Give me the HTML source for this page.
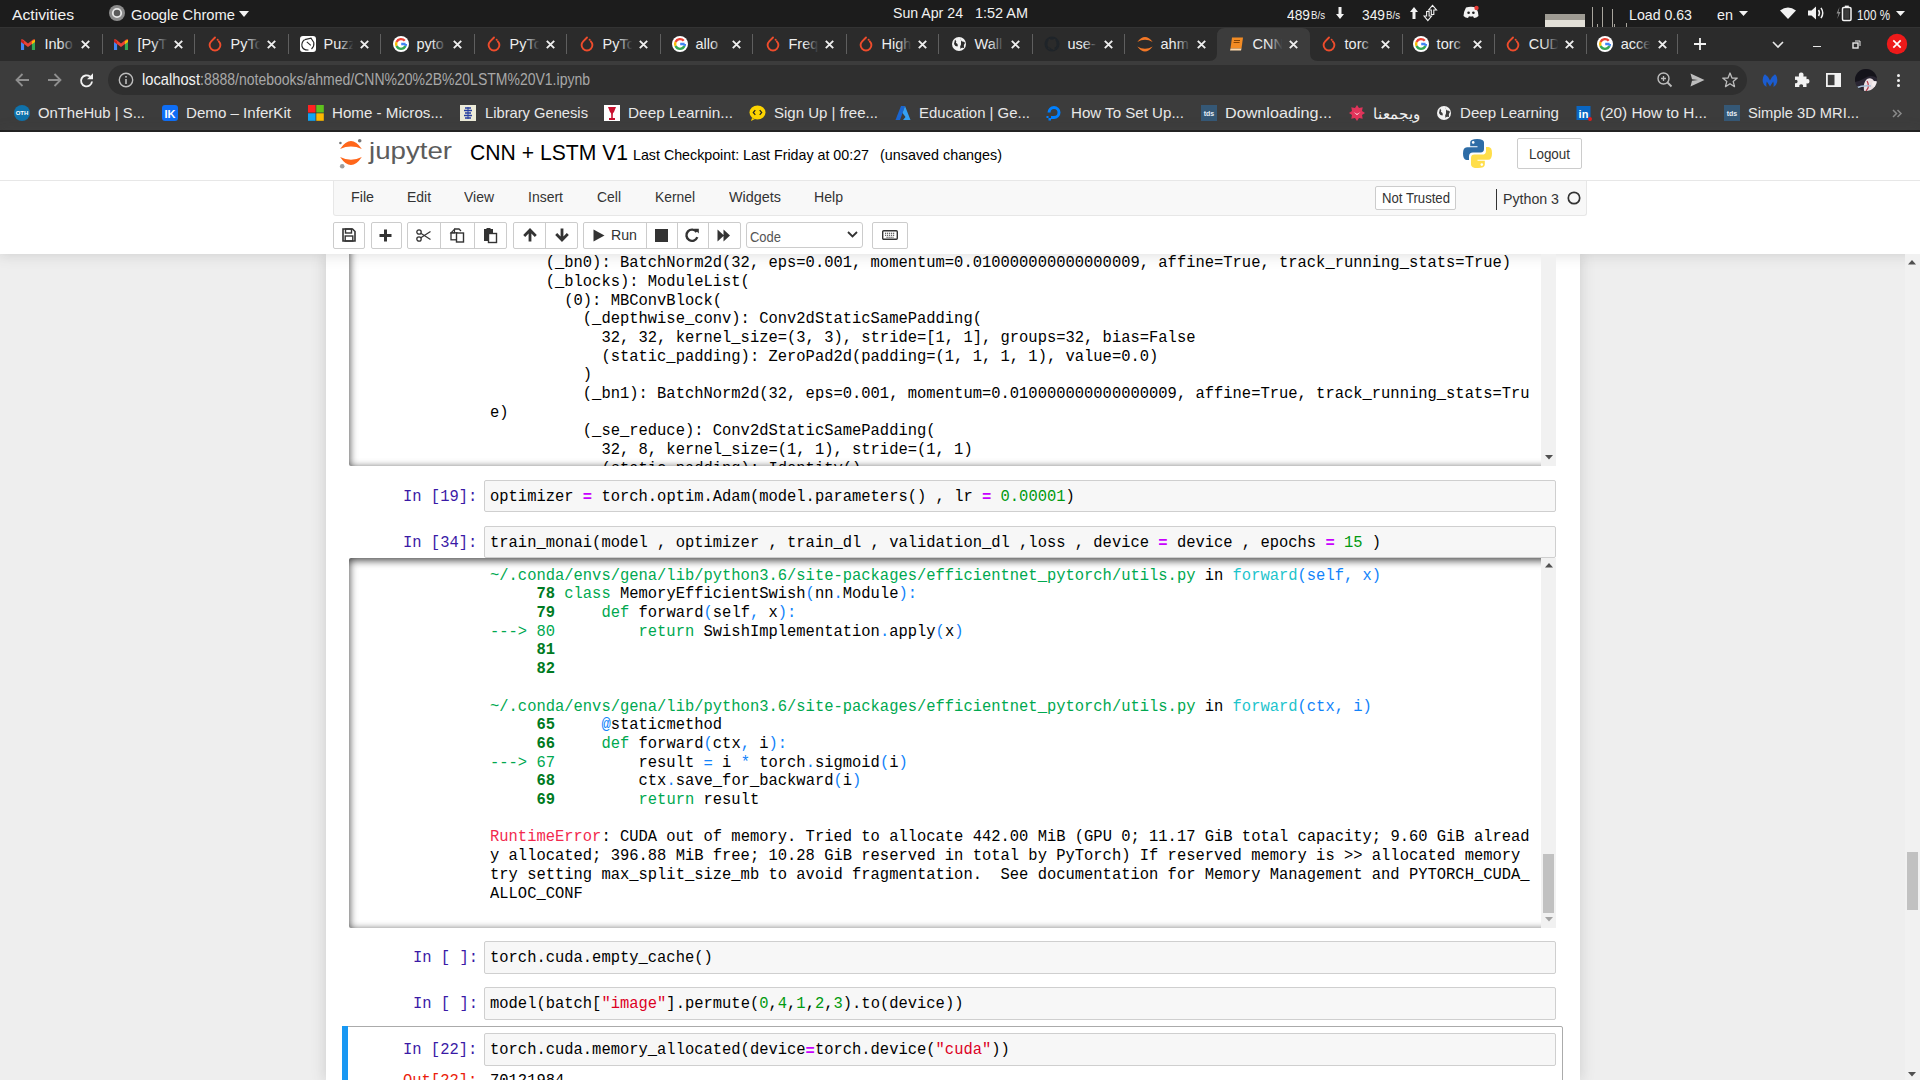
<!DOCTYPE html><html><head><meta charset="utf-8"><style>
html,body{margin:0;padding:0;width:1920px;height:1080px;overflow:hidden;background:#eeeeee;}
.t{position:absolute;white-space:pre;line-height:1;}
.r{position:absolute;box-sizing:border-box;}
svg{position:absolute;overflow:visible;}
</style></head><body>

<div class="r" style="left:0px;top:0px;width:1920px;height:27px;background:#1c1c1c"></div>
<div class="t" style="left:12.00px;top:6.70px;font-size:15px;color:#f2f2f2;font-family:'Liberation Sans', sans-serif;font-weight:normal;transform:scaleX(1.0476);transform-origin:0 0;">Activities</div>
<svg style="left:109px;top:5px;" width="16" height="16" viewBox="0 0 16 16"><circle cx="8" cy="8" r="8" fill="#8c8c8c"/><circle cx="8" cy="8" r="4.2" fill="#5a5a5a" stroke="#e8e8e8" stroke-width="1.8"/></svg>
<div class="t" style="left:131.00px;top:6.70px;font-size:15px;color:#f2f2f2;font-family:'Liberation Sans', sans-serif;font-weight:normal;transform:scaleX(0.9822);transform-origin:0 0;">Google Chrome</div>
<svg style="left:239px;top:11px;" width="10" height="6" viewBox="0 0 10 6"><path d="M0 0 L10 0 L5 6 Z" fill="#f2f2f2"/></svg>
<div class="t" style="left:893.00px;top:4.90px;font-size:15px;color:#f2f2f2;font-family:'Liberation Sans', sans-serif;font-weight:normal;transform:scaleX(0.9431);transform-origin:0 0;">Sun Apr 24</div>
<div class="t" style="left:975.00px;top:4.90px;font-size:15px;color:#f2f2f2;font-family:'Liberation Sans', sans-serif;font-weight:normal;transform:scaleX(0.9630);transform-origin:0 0;">1:52 AM</div>
<div class="t" style="left:1287.00px;top:6.70px;font-size:15px;color:#f2f2f2;font-family:'Liberation Sans', sans-serif;font-weight:normal;transform:scaleX(0.9190);transform-origin:0 0;">489</div>
<div class="t" style="left:1311.00px;top:10.09px;font-size:11px;color:#f2f2f2;font-family:'Liberation Sans', sans-serif;font-weight:normal;transform:scaleX(0.8809);transform-origin:0 0;">B/s</div>
<svg style="left:1336px;top:7px;" width="8" height="12" viewBox="0 0 8 12"><path d="M2.5 0 H5.5 V7 H8 L4 12 L0 7 H2.5 Z" fill="#f2f2f2"/></svg>
<div class="t" style="left:1362.00px;top:6.70px;font-size:15px;color:#f2f2f2;font-family:'Liberation Sans', sans-serif;font-weight:normal;transform:scaleX(0.9190);transform-origin:0 0;">349</div>
<div class="t" style="left:1386.00px;top:10.09px;font-size:11px;color:#f2f2f2;font-family:'Liberation Sans', sans-serif;font-weight:normal;transform:scaleX(0.8809);transform-origin:0 0;">B/s</div>
<svg style="left:1410px;top:7px;" width="8" height="12" viewBox="0 0 8 12"><path d="M2.5 12 H5.5 V5 H8 L4 0 L0 5 H2.5 Z" fill="#f2f2f2"/></svg>
<svg style="left:1424px;top:5px;" width="14" height="16" viewBox="0 0 14 16"><path d="M2.6 6.5 H5.1 V11 H7.6 L3.85 15.6 L0.1 11 H2.6 Z" fill="#1c1c1c" stroke="#f2f2f2" stroke-width="1.1"/><path d="M7.3 9.5 H9.8 V5 H12.5 L8.55 0.4 L4.6 5 H7.3 Z" fill="#1c1c1c" stroke="#f2f2f2" stroke-width="1.1"/></svg>
<svg style="left:1463px;top:6px;" width="16" height="12" viewBox="0 0 16 12"><path d="M3 1.5 Q8 0 13 1.5 Q15.5 6 15.5 10 Q13.5 11.8 11 12 L10 10.3 Q8 10.9 6 10.3 L5 12 Q2.5 11.8 0.5 10 Q0.5 6 3 1.5 Z" fill="#f2f2f2"/><circle cx="5.6" cy="6.8" r="1.3" fill="#1c1c1c"/><circle cx="10.4" cy="6.8" r="1.3" fill="#1c1c1c"/><circle cx="13.5" cy="2" r="2.2" fill="#e53935"/></svg>
<div class="r" style="left:1545px;top:14px;width:40px;height:6px;background:#9e9b93"></div>
<div class="r" style="left:1545px;top:20px;width:40px;height:7px;background:#e2dfd7"></div>
<div class="r" style="left:1592px;top:7px;width:1px;height:20px;background:#a8a59d"></div>
<div class="r" style="left:1602px;top:7px;width:1px;height:20px;background:#a8a59d"></div>
<div class="r" style="left:1612px;top:9px;width:1px;height:18px;background:#a8a59d"></div>
<div class="r" style="left:1597px;top:24px;width:1px;height:3px;background:#a8a59d"></div>
<div class="r" style="left:1614px;top:24px;width:1px;height:3px;background:#a8a59d"></div>
<div class="r" style="left:1626px;top:23px;width:1px;height:4px;background:#a8a59d"></div>
<div class="t" style="left:1629.00px;top:6.70px;font-size:15px;color:#f2f2f2;font-family:'Liberation Sans', sans-serif;font-weight:normal;transform:scaleX(0.9441);transform-origin:0 0;">Load 0.63</div>
<div class="t" style="left:1717.00px;top:6.70px;font-size:15px;color:#f2f2f2;font-family:'Liberation Sans', sans-serif;font-weight:normal;transform:scaleX(0.9589);transform-origin:0 0;">en</div>
<svg style="left:1739px;top:11px;" width="9" height="5" viewBox="0 0 9 5"><path d="M0 0 L9 0 L4.5 5 Z" fill="#f2f2f2"/></svg>
<svg style="left:1780px;top:7px;" width="16" height="12" viewBox="0 0 16 12"><path d="M0 3.5 Q8 -2.5 16 3.5 L8 12 Z" fill="#f2f2f2"/></svg>
<svg style="left:1808px;top:6px;" width="16" height="14" viewBox="0 0 16 14"><path d="M0 4.5 H3.5 L8 0.5 V13.5 L3.5 9.5 H0 Z" fill="#f2f2f2"/><path d="M10.5 4 Q12.5 7 10.5 10 M13 1.8 Q16.5 7 13 12.2" fill="none" stroke="#f2f2f2" stroke-width="1.5"/></svg>
<svg style="left:1836px;top:5px;" width="16" height="16" viewBox="0 0 16 16"><path d="M3.5 2 L0.5 8.5 H2.5 L1.2 14 L4.5 7 H2.5 Z" fill="#8a8a8a"/><rect x="6.5" y="2.5" width="8.5" height="13" rx="1.2" fill="none" stroke="#f2f2f2" stroke-width="1.5"/><rect x="8.8" y="0.6" width="4" height="2" fill="#f2f2f2"/><rect x="8.3" y="4.3" width="5" height="9.4" fill="#f2f2f2" opacity="0.15"/></svg>
<div class="t" style="left:1857.00px;top:6.70px;font-size:15px;color:#f2f2f2;font-family:'Liberation Sans', sans-serif;font-weight:normal;transform:scaleX(0.7759);transform-origin:0 0;">100 %</div>
<svg style="left:1896px;top:11px;" width="9" height="5" viewBox="0 0 9 5"><path d="M0 0 L9 0 L4.5 5 Z" fill="#f2f2f2"/></svg>
<div class="r" style="left:0px;top:27px;width:1920px;height:34px;background:#2b2b2b"></div>
<div class="r" style="left:0px;top:27px;width:1920px;height:1px;background:#333333"></div>
<svg style="left:1209.0px;top:28px" width="109" height="33" viewBox="0 0 109 33"><path d="M0 33 Q8 33 8 25 L8 8 Q8 0 16 0 L93 0 Q101 0 101 8 L101 25 Q101 33 109 33 Z" fill="#3c3c3c"/></svg>
<svg style="left:21px;top:38.5px;" width="14" height="11" viewBox="0 0 14 11"><path d="M0 1.6 V11 H3.1 V4.2 Z" fill="#4285f4"/><path d="M14 1.6 V11 H10.9 V4.2 Z" fill="#34a853"/><path d="M0 1.6 Q0 -0.4 2 0.6 L7 4.6 L12 0.6 Q14 -0.4 14 1.6 V2.8 L7 8 L0 2.8 Z" fill="#ea4335"/><path d="M10.9 2.3 L14 0.6 V2.9 L10.9 5.2 Z" fill="#fbbc04"/><path d="M0 0.6 L3.1 2.3 V5.2 L0 2.9 Z" fill="#c5221f"/></svg>
<div class="t" style="left:44.50px;top:36.73px;font-size:14.5px;color:#eeeeee;font-family:'Liberation Sans', sans-serif;font-weight:normal;">Inbo</div>
<div class="r" style="left:60.0px;top:33px;width:16px;height:22px;background:linear-gradient(to right, rgba(0,0,0,0), #2b2b2b 90%)"></div>
<div class="r" style="left:76.0px;top:33px;width:4px;height:22px;background:#2b2b2b"></div>
<svg style="left:81px;top:40px;" width="9" height="9" viewBox="0 0 9 9"><path d="M0.8 0.8 L8.2 8.2 M8.2 0.8 L0.8 8.2" stroke="#eeeeee" stroke-width="1.9"/></svg>
<div class="r" style="left:102px;top:34px;width:1px;height:20px;background:#5f5f5f"></div>
<svg style="left:114px;top:38.5px;" width="14" height="11" viewBox="0 0 14 11"><path d="M0 1.6 V11 H3.1 V4.2 Z" fill="#4285f4"/><path d="M14 1.6 V11 H10.9 V4.2 Z" fill="#34a853"/><path d="M0 1.6 Q0 -0.4 2 0.6 L7 4.6 L12 0.6 Q14 -0.4 14 1.6 V2.8 L7 8 L0 2.8 Z" fill="#ea4335"/><path d="M10.9 2.3 L14 0.6 V2.9 L10.9 5.2 Z" fill="#fbbc04"/><path d="M0 0.6 L3.1 2.3 V5.2 L0 2.9 Z" fill="#c5221f"/></svg>
<div class="t" style="left:137.50px;top:36.73px;font-size:14.5px;color:#eeeeee;font-family:'Liberation Sans', sans-serif;font-weight:normal;">[PyT</div>
<div class="r" style="left:153.0px;top:33px;width:16px;height:22px;background:linear-gradient(to right, rgba(0,0,0,0), #2b2b2b 90%)"></div>
<div class="r" style="left:169.0px;top:33px;width:4px;height:22px;background:#2b2b2b"></div>
<svg style="left:174px;top:40px;" width="9" height="9" viewBox="0 0 9 9"><path d="M0.8 0.8 L8.2 8.2 M8.2 0.8 L0.8 8.2" stroke="#eeeeee" stroke-width="1.9"/></svg>
<div class="r" style="left:194px;top:34px;width:1px;height:20px;background:#5f5f5f"></div>
<svg style="left:207px;top:36px;" width="16" height="16" viewBox="0 0 16 16"><path d="M8 1.5 L4.2 5.3 A5.4 5.4 0 1 0 11.8 5.3" fill="none" stroke="#ee4c2c" stroke-width="1.9" stroke-linecap="round"/><circle cx="10.6" cy="3.8" r="1" fill="#ee4c2c"/></svg>
<div class="t" style="left:230.50px;top:36.73px;font-size:14.5px;color:#eeeeee;font-family:'Liberation Sans', sans-serif;font-weight:normal;">PyTo</div>
<div class="r" style="left:246.0px;top:33px;width:16px;height:22px;background:linear-gradient(to right, rgba(0,0,0,0), #2b2b2b 90%)"></div>
<div class="r" style="left:262.0px;top:33px;width:4px;height:22px;background:#2b2b2b"></div>
<svg style="left:267px;top:40px;" width="9" height="9" viewBox="0 0 9 9"><path d="M0.8 0.8 L8.2 8.2 M8.2 0.8 L0.8 8.2" stroke="#eeeeee" stroke-width="1.9"/></svg>
<div class="r" style="left:288px;top:34px;width:1px;height:20px;background:#5f5f5f"></div>
<svg style="left:300px;top:36px;" width="16" height="16" viewBox="0 0 16 16"><rect x="0" y="0" width="16" height="16" rx="3" fill="#fff"/><path d="M4.5 3.8 Q1.2 6.5 2 10.5 Q3.2 14.2 8.5 14 M4.8 3.6 L11 2.2 L13.8 6.5 Q14.5 10 11.5 13 M6.8 5.8 L10.8 9.3" fill="none" stroke="#262626" stroke-width="1.1"/></svg>
<div class="t" style="left:323.50px;top:36.73px;font-size:14.5px;color:#eeeeee;font-family:'Liberation Sans', sans-serif;font-weight:normal;">Puzz</div>
<div class="r" style="left:339.0px;top:33px;width:16px;height:22px;background:linear-gradient(to right, rgba(0,0,0,0), #2b2b2b 90%)"></div>
<div class="r" style="left:355.0px;top:33px;width:4px;height:22px;background:#2b2b2b"></div>
<svg style="left:360px;top:40px;" width="9" height="9" viewBox="0 0 9 9"><path d="M0.8 0.8 L8.2 8.2 M8.2 0.8 L0.8 8.2" stroke="#eeeeee" stroke-width="1.9"/></svg>
<div class="r" style="left:380px;top:34px;width:1px;height:20px;background:#5f5f5f"></div>
<svg style="left:393px;top:36px;" width="16" height="16" viewBox="0 0 16 16"><circle cx="8" cy="8" r="8" fill="#fff"/><g fill="none" stroke-width="2.4"><path d="M11.75 4.85 A4.9 4.9 0 0 0 3.56 5.93" stroke="#ea4335"/><path d="M3.56 5.93 A4.9 4.9 0 0 0 3.56 10.07" stroke="#fbbc05"/><path d="M3.56 10.07 A4.9 4.9 0 0 0 12.44 10.07" stroke="#34a853"/><path d="M12.44 10.07 A4.9 4.9 0 0 0 12.9 8 M8.2 8 H12.6" stroke="#4285f4"/></g></svg>
<div class="t" style="left:416.50px;top:36.73px;font-size:14.5px;color:#eeeeee;font-family:'Liberation Sans', sans-serif;font-weight:normal;">pyto</div>
<div class="r" style="left:432.0px;top:33px;width:16px;height:22px;background:linear-gradient(to right, rgba(0,0,0,0), #2b2b2b 90%)"></div>
<div class="r" style="left:448.0px;top:33px;width:4px;height:22px;background:#2b2b2b"></div>
<svg style="left:453px;top:40px;" width="9" height="9" viewBox="0 0 9 9"><path d="M0.8 0.8 L8.2 8.2 M8.2 0.8 L0.8 8.2" stroke="#eeeeee" stroke-width="1.9"/></svg>
<div class="r" style="left:474px;top:34px;width:1px;height:20px;background:#5f5f5f"></div>
<svg style="left:486px;top:36px;" width="16" height="16" viewBox="0 0 16 16"><path d="M8 1.5 L4.2 5.3 A5.4 5.4 0 1 0 11.8 5.3" fill="none" stroke="#ee4c2c" stroke-width="1.9" stroke-linecap="round"/><circle cx="10.6" cy="3.8" r="1" fill="#ee4c2c"/></svg>
<div class="t" style="left:509.50px;top:36.73px;font-size:14.5px;color:#eeeeee;font-family:'Liberation Sans', sans-serif;font-weight:normal;">PyTo</div>
<div class="r" style="left:525.0px;top:33px;width:16px;height:22px;background:linear-gradient(to right, rgba(0,0,0,0), #2b2b2b 90%)"></div>
<div class="r" style="left:541.0px;top:33px;width:4px;height:22px;background:#2b2b2b"></div>
<svg style="left:546px;top:40px;" width="9" height="9" viewBox="0 0 9 9"><path d="M0.8 0.8 L8.2 8.2 M8.2 0.8 L0.8 8.2" stroke="#eeeeee" stroke-width="1.9"/></svg>
<div class="r" style="left:566px;top:34px;width:1px;height:20px;background:#5f5f5f"></div>
<svg style="left:579px;top:36px;" width="16" height="16" viewBox="0 0 16 16"><path d="M8 1.5 L4.2 5.3 A5.4 5.4 0 1 0 11.8 5.3" fill="none" stroke="#ee4c2c" stroke-width="1.9" stroke-linecap="round"/><circle cx="10.6" cy="3.8" r="1" fill="#ee4c2c"/></svg>
<div class="t" style="left:602.50px;top:36.73px;font-size:14.5px;color:#eeeeee;font-family:'Liberation Sans', sans-serif;font-weight:normal;">PyTo</div>
<div class="r" style="left:618.0px;top:33px;width:16px;height:22px;background:linear-gradient(to right, rgba(0,0,0,0), #2b2b2b 90%)"></div>
<div class="r" style="left:634.0px;top:33px;width:4px;height:22px;background:#2b2b2b"></div>
<svg style="left:639px;top:40px;" width="9" height="9" viewBox="0 0 9 9"><path d="M0.8 0.8 L8.2 8.2 M8.2 0.8 L0.8 8.2" stroke="#eeeeee" stroke-width="1.9"/></svg>
<div class="r" style="left:660px;top:34px;width:1px;height:20px;background:#5f5f5f"></div>
<svg style="left:672px;top:36px;" width="16" height="16" viewBox="0 0 16 16"><circle cx="8" cy="8" r="8" fill="#fff"/><g fill="none" stroke-width="2.4"><path d="M11.75 4.85 A4.9 4.9 0 0 0 3.56 5.93" stroke="#ea4335"/><path d="M3.56 5.93 A4.9 4.9 0 0 0 3.56 10.07" stroke="#fbbc05"/><path d="M3.56 10.07 A4.9 4.9 0 0 0 12.44 10.07" stroke="#34a853"/><path d="M12.44 10.07 A4.9 4.9 0 0 0 12.9 8 M8.2 8 H12.6" stroke="#4285f4"/></g></svg>
<div class="t" style="left:695.50px;top:36.73px;font-size:14.5px;color:#eeeeee;font-family:'Liberation Sans', sans-serif;font-weight:normal;">allo</div>
<div class="r" style="left:711.0px;top:33px;width:16px;height:22px;background:linear-gradient(to right, rgba(0,0,0,0), #2b2b2b 90%)"></div>
<div class="r" style="left:727.0px;top:33px;width:4px;height:22px;background:#2b2b2b"></div>
<svg style="left:732px;top:40px;" width="9" height="9" viewBox="0 0 9 9"><path d="M0.8 0.8 L8.2 8.2 M8.2 0.8 L0.8 8.2" stroke="#eeeeee" stroke-width="1.9"/></svg>
<div class="r" style="left:752px;top:34px;width:1px;height:20px;background:#5f5f5f"></div>
<svg style="left:765px;top:36px;" width="16" height="16" viewBox="0 0 16 16"><path d="M8 1.5 L4.2 5.3 A5.4 5.4 0 1 0 11.8 5.3" fill="none" stroke="#ee4c2c" stroke-width="1.9" stroke-linecap="round"/><circle cx="10.6" cy="3.8" r="1" fill="#ee4c2c"/></svg>
<div class="t" style="left:788.50px;top:36.73px;font-size:14.5px;color:#eeeeee;font-family:'Liberation Sans', sans-serif;font-weight:normal;">Freq</div>
<div class="r" style="left:804.0px;top:33px;width:16px;height:22px;background:linear-gradient(to right, rgba(0,0,0,0), #2b2b2b 90%)"></div>
<div class="r" style="left:820.0px;top:33px;width:4px;height:22px;background:#2b2b2b"></div>
<svg style="left:825px;top:40px;" width="9" height="9" viewBox="0 0 9 9"><path d="M0.8 0.8 L8.2 8.2 M8.2 0.8 L0.8 8.2" stroke="#eeeeee" stroke-width="1.9"/></svg>
<div class="r" style="left:846px;top:34px;width:1px;height:20px;background:#5f5f5f"></div>
<svg style="left:858px;top:36px;" width="16" height="16" viewBox="0 0 16 16"><path d="M8 1.5 L4.2 5.3 A5.4 5.4 0 1 0 11.8 5.3" fill="none" stroke="#ee4c2c" stroke-width="1.9" stroke-linecap="round"/><circle cx="10.6" cy="3.8" r="1" fill="#ee4c2c"/></svg>
<div class="t" style="left:881.50px;top:36.73px;font-size:14.5px;color:#eeeeee;font-family:'Liberation Sans', sans-serif;font-weight:normal;">High</div>
<div class="r" style="left:897.0px;top:33px;width:16px;height:22px;background:linear-gradient(to right, rgba(0,0,0,0), #2b2b2b 90%)"></div>
<div class="r" style="left:913.0px;top:33px;width:4px;height:22px;background:#2b2b2b"></div>
<svg style="left:918px;top:40px;" width="9" height="9" viewBox="0 0 9 9"><path d="M0.8 0.8 L8.2 8.2 M8.2 0.8 L0.8 8.2" stroke="#eeeeee" stroke-width="1.9"/></svg>
<div class="r" style="left:938px;top:34px;width:1px;height:20px;background:#5f5f5f"></div>
<svg style="left:951px;top:36px;" width="16" height="16" viewBox="0 0 16 16"><circle cx="8" cy="8" r="7" fill="#f2f2f2"/><path d="M4 3.5 Q6 5 5 7 Q7.5 8 6.5 10.5 Q4 10.5 3 8 Z M10 2 Q9 4 11 5.5 Q13.5 5 14 7 Q12 9 13 12 Q10.5 11 9.5 13 Q8.5 10 10 8.5" fill="#2b2b2b"/></svg>
<div class="t" style="left:974.50px;top:36.73px;font-size:14.5px;color:#eeeeee;font-family:'Liberation Sans', sans-serif;font-weight:normal;">Wall</div>
<div class="r" style="left:990.0px;top:33px;width:16px;height:22px;background:linear-gradient(to right, rgba(0,0,0,0), #2b2b2b 90%)"></div>
<div class="r" style="left:1006.0px;top:33px;width:4px;height:22px;background:#2b2b2b"></div>
<svg style="left:1011px;top:40px;" width="9" height="9" viewBox="0 0 9 9"><path d="M0.8 0.8 L8.2 8.2 M8.2 0.8 L0.8 8.2" stroke="#eeeeee" stroke-width="1.9"/></svg>
<div class="r" style="left:1032px;top:34px;width:1px;height:20px;background:#5f5f5f"></div>
<svg style="left:1044px;top:36px;" width="16" height="16" viewBox="0 0 16 16"><circle cx="8" cy="8" r="7.5" fill="#1f2429"/><path d="M5.5 14.5 V12 Q3.5 12 3 10 M10.5 14.5 V11.5 Q13 10.5 12.5 7.5 Q12.5 5.5 11.5 4.5 Q11.5 3 11 2.8 Q10 3 9 3.8 Q8 3.4 7 3.8 Q6 3 5 2.8 Q4.5 3 4.5 4.5 Q3.5 5.5 3.5 7.5 Q3 10.5 5.5 11.5" fill="#2b2b2b"/></svg>
<div class="t" style="left:1067.50px;top:36.73px;font-size:14.5px;color:#eeeeee;font-family:'Liberation Sans', sans-serif;font-weight:normal;">use-</div>
<div class="r" style="left:1083.0px;top:33px;width:16px;height:22px;background:linear-gradient(to right, rgba(0,0,0,0), #2b2b2b 90%)"></div>
<div class="r" style="left:1099.0px;top:33px;width:4px;height:22px;background:#2b2b2b"></div>
<svg style="left:1104px;top:40px;" width="9" height="9" viewBox="0 0 9 9"><path d="M0.8 0.8 L8.2 8.2 M8.2 0.8 L0.8 8.2" stroke="#eeeeee" stroke-width="1.9"/></svg>
<div class="r" style="left:1124px;top:34px;width:1px;height:20px;background:#5f5f5f"></div>
<svg style="left:1137px;top:36px;" width="16" height="16" viewBox="0 0 16 16"><path d="M0.3 6 Q8 -4 15.7 6 Q8 1.6 0.3 6 Z" fill="#f37726"/><path d="M0.3 10.5 Q8 20.5 15.7 10.5 Q8 14.9 0.3 10.5 Z" fill="#f37726"/></svg>
<div class="t" style="left:1160.50px;top:36.73px;font-size:14.5px;color:#eeeeee;font-family:'Liberation Sans', sans-serif;font-weight:normal;">ahm</div>
<div class="r" style="left:1176.0px;top:33px;width:16px;height:22px;background:linear-gradient(to right, rgba(0,0,0,0), #2b2b2b 90%)"></div>
<div class="r" style="left:1192.0px;top:33px;width:4px;height:22px;background:#2b2b2b"></div>
<svg style="left:1197px;top:40px;" width="9" height="9" viewBox="0 0 9 9"><path d="M0.8 0.8 L8.2 8.2 M8.2 0.8 L0.8 8.2" stroke="#eeeeee" stroke-width="1.9"/></svg>
<svg style="left:1229px;top:36px;" width="16" height="16" viewBox="0 0 16 16"><path d="M3 1.5 H14 L12.5 12.5 H1.5 Z" fill="#f28b24"/><path d="M1.5 12.5 H12.5 L12 14.5 H1 Z" fill="#ffd7a8"/><path d="M5 4.5 H11 M4.6 6.5 H10.6" stroke="#7a3c00" stroke-width="0.9"/></svg>
<div class="t" style="left:1252.50px;top:36.73px;font-size:14.5px;color:#eeeeee;font-family:'Liberation Sans', sans-serif;font-weight:normal;">CNN</div>
<div class="r" style="left:1268.0px;top:33px;width:16px;height:22px;background:linear-gradient(to right, rgba(0,0,0,0), #3c3c3c 90%)"></div>
<div class="r" style="left:1284.0px;top:33px;width:4px;height:22px;background:#3c3c3c"></div>
<svg style="left:1289px;top:40px;" width="9" height="9" viewBox="0 0 9 9"><path d="M0.8 0.8 L8.2 8.2 M8.2 0.8 L0.8 8.2" stroke="#eeeeee" stroke-width="1.9"/></svg>
<svg style="left:1321px;top:36px;" width="16" height="16" viewBox="0 0 16 16"><path d="M8 1.5 L4.2 5.3 A5.4 5.4 0 1 0 11.8 5.3" fill="none" stroke="#ee4c2c" stroke-width="1.9" stroke-linecap="round"/><circle cx="10.6" cy="3.8" r="1" fill="#ee4c2c"/></svg>
<div class="t" style="left:1344.56px;top:36.73px;font-size:14.5px;color:#eeeeee;font-family:'Liberation Sans', sans-serif;font-weight:normal;">torc</div>
<div class="r" style="left:1360.1px;top:33px;width:16px;height:22px;background:linear-gradient(to right, rgba(0,0,0,0), #2b2b2b 90%)"></div>
<div class="r" style="left:1376.1px;top:33px;width:4px;height:22px;background:#2b2b2b"></div>
<svg style="left:1381px;top:40px;" width="9" height="9" viewBox="0 0 9 9"><path d="M0.8 0.8 L8.2 8.2 M8.2 0.8 L0.8 8.2" stroke="#eeeeee" stroke-width="1.9"/></svg>
<div class="r" style="left:1402px;top:34px;width:1px;height:20px;background:#5f5f5f"></div>
<svg style="left:1413px;top:36px;" width="16" height="16" viewBox="0 0 16 16"><circle cx="8" cy="8" r="8" fill="#fff"/><g fill="none" stroke-width="2.4"><path d="M11.75 4.85 A4.9 4.9 0 0 0 3.56 5.93" stroke="#ea4335"/><path d="M3.56 5.93 A4.9 4.9 0 0 0 3.56 10.07" stroke="#fbbc05"/><path d="M3.56 10.07 A4.9 4.9 0 0 0 12.44 10.07" stroke="#34a853"/><path d="M12.44 10.07 A4.9 4.9 0 0 0 12.9 8 M8.2 8 H12.6" stroke="#4285f4"/></g></svg>
<div class="t" style="left:1436.62px;top:36.73px;font-size:14.5px;color:#eeeeee;font-family:'Liberation Sans', sans-serif;font-weight:normal;">torc</div>
<div class="r" style="left:1452.1px;top:33px;width:16px;height:22px;background:linear-gradient(to right, rgba(0,0,0,0), #2b2b2b 90%)"></div>
<div class="r" style="left:1468.1px;top:33px;width:4px;height:22px;background:#2b2b2b"></div>
<svg style="left:1473px;top:40px;" width="9" height="9" viewBox="0 0 9 9"><path d="M0.8 0.8 L8.2 8.2 M8.2 0.8 L0.8 8.2" stroke="#eeeeee" stroke-width="1.9"/></svg>
<div class="r" style="left:1494px;top:34px;width:1px;height:20px;background:#5f5f5f"></div>
<svg style="left:1505px;top:36px;" width="16" height="16" viewBox="0 0 16 16"><path d="M8 1.5 L4.2 5.3 A5.4 5.4 0 1 0 11.8 5.3" fill="none" stroke="#ee4c2c" stroke-width="1.9" stroke-linecap="round"/><circle cx="10.6" cy="3.8" r="1" fill="#ee4c2c"/></svg>
<div class="t" style="left:1528.68px;top:36.73px;font-size:14.5px;color:#eeeeee;font-family:'Liberation Sans', sans-serif;font-weight:normal;">CUD</div>
<div class="r" style="left:1544.2px;top:33px;width:16px;height:22px;background:linear-gradient(to right, rgba(0,0,0,0), #2b2b2b 90%)"></div>
<div class="r" style="left:1560.2px;top:33px;width:4px;height:22px;background:#2b2b2b"></div>
<svg style="left:1565px;top:40px;" width="9" height="9" viewBox="0 0 9 9"><path d="M0.8 0.8 L8.2 8.2 M8.2 0.8 L0.8 8.2" stroke="#eeeeee" stroke-width="1.9"/></svg>
<div class="r" style="left:1586px;top:34px;width:1px;height:20px;background:#5f5f5f"></div>
<svg style="left:1597px;top:36px;" width="16" height="16" viewBox="0 0 16 16"><circle cx="8" cy="8" r="8" fill="#fff"/><g fill="none" stroke-width="2.4"><path d="M11.75 4.85 A4.9 4.9 0 0 0 3.56 5.93" stroke="#ea4335"/><path d="M3.56 5.93 A4.9 4.9 0 0 0 3.56 10.07" stroke="#fbbc05"/><path d="M3.56 10.07 A4.9 4.9 0 0 0 12.44 10.07" stroke="#34a853"/><path d="M12.44 10.07 A4.9 4.9 0 0 0 12.9 8 M8.2 8 H12.6" stroke="#4285f4"/></g></svg>
<div class="t" style="left:1620.74px;top:36.73px;font-size:14.5px;color:#eeeeee;font-family:'Liberation Sans', sans-serif;font-weight:normal;">acce</div>
<div class="r" style="left:1636.2px;top:33px;width:16px;height:22px;background:linear-gradient(to right, rgba(0,0,0,0), #2b2b2b 90%)"></div>
<div class="r" style="left:1652.2px;top:33px;width:4px;height:22px;background:#2b2b2b"></div>
<svg style="left:1658px;top:40px;" width="9" height="9" viewBox="0 0 9 9"><path d="M0.8 0.8 L8.2 8.2 M8.2 0.8 L0.8 8.2" stroke="#eeeeee" stroke-width="1.9"/></svg>
<div class="r" style="left:1677px;top:34px;width:1px;height:20px;background:#5f5f5f"></div>
<svg style="left:1694px;top:38px;" width="12" height="12" viewBox="0 0 12 12"><path d="M6 0 V12 M0 6 H12" stroke="#f2f2f2" stroke-width="1.8"/></svg>
<svg style="left:1772px;top:41px;" width="12" height="7" viewBox="0 0 12 7"><path d="M1 1 L6 6 L11 1" fill="none" stroke="#e8e8e8" stroke-width="1.6"/></svg>
<div class="r" style="left:1813px;top:45.5px;width:8px;height:1.6px;background:#e8e8e8"></div>
<svg style="left:1852px;top:40px;" width="9" height="9" viewBox="0 0 9 9"><rect x="1" y="3" width="5" height="5" fill="none" stroke="#e8e8e8" stroke-width="1.4"/><path d="M3 1 H8 V6" fill="none" stroke="#e8e8e8" stroke-width="1"/></svg>
<svg style="left:1886px;top:33px;" width="22" height="22" viewBox="0 0 22 22"><circle cx="11" cy="11" r="10.2" fill="#ee1a1a"/><path d="M7.3 7.3 L14.7 14.7 M14.7 7.3 L7.3 14.7" stroke="#fff" stroke-width="1.7"/></svg>
<div class="r" style="left:0px;top:61px;width:1920px;height:35px;background:#3c3c3c"></div>
<svg style="left:15px;top:73px;" width="15" height="14" viewBox="0 0 15 14"><path d="M14 7 H2 M7.5 1 L1.5 7 L7.5 13" fill="none" stroke="#8f8f8f" stroke-width="1.8"/></svg>
<svg style="left:47px;top:73px;" width="15" height="14" viewBox="0 0 15 14"><path d="M1 7 H13 M7.5 1 L13.5 7 L7.5 13" fill="none" stroke="#8f8f8f" stroke-width="1.8"/></svg>
<svg style="left:79px;top:73px;" width="15" height="15" viewBox="0 0 15 15"><path d="M13 8.5 A5.5 5.5 0 1 1 11 3.6" fill="none" stroke="#f2f2f2" stroke-width="1.9"/><path d="M8 6.3 H14 V0.3 Z" fill="#f2f2f2"/></svg>
<div class="r" style="left:108px;top:65px;width:1639px;height:30px;background:#2f2f2f;border-radius:15px"></div>
<svg style="left:118px;top:72px;" width="16" height="16" viewBox="0 0 16 16"><circle cx="8" cy="8" r="6.7" fill="none" stroke="#bdbdbd" stroke-width="1.4"/><rect x="7.2" y="7" width="1.6" height="5" fill="#bdbdbd"/><rect x="7.2" y="4" width="1.6" height="1.6" fill="#bdbdbd"/></svg>
<div class="t" style="left:142.00px;top:72.46px;font-size:16px;color:#f2f2f2;font-family:'Liberation Sans', sans-serif;font-weight:normal;transform:scaleX(0.9184);transform-origin:0 0;">localhost</div>
<div class="t" style="left:200.00px;top:72.46px;font-size:16px;color:#a8a8a8;font-family:'Liberation Sans', sans-serif;font-weight:normal;transform:scaleX(0.8752);transform-origin:0 0;">:8888/notebooks/ahmed/CNN%20%2B%20LSTM%20V1.ipynb</div>
<svg style="left:1657px;top:72px;" width="16" height="16" viewBox="0 0 16 16"><circle cx="6.5" cy="6.5" r="5.5" fill="none" stroke="#bdbdbd" stroke-width="1.4"/><path d="M10.5 10.5 L14.5 14.5" stroke="#bdbdbd" stroke-width="1.8"/><path d="M6.5 4 V9 M4 6.5 H9" stroke="#bdbdbd" stroke-width="1.3"/></svg>
<svg style="left:1690px;top:73px;" width="15" height="14" viewBox="0 0 15 14"><path d="M0.5 0.5 L14.5 7 L0.5 13.5 L2 7.8 L8 7 L2 6.2 Z" fill="#bdbdbd"/></svg>
<svg style="left:1722px;top:72px;" width="16" height="16" viewBox="0 0 16 16"><path d="M8 1 L10 6 L15.3 6.1 L11.2 9.4 L12.5 14.6 L8 11.7 L3.5 14.6 L4.8 9.4 L0.7 6.1 L6 6 Z" fill="none" stroke="#bdbdbd" stroke-width="1.3" stroke-linejoin="round"/></svg>
<svg style="left:1762px;top:73px;" width="16" height="15" viewBox="0 0 16 15"><path d="M0.8 9 Q0.3 3.5 3 1.2 Q6 3 8 7.5 Q10 3 13 1.2 Q15.7 3.5 15.2 9 Q14.5 12.5 11.5 14 Q12 10.5 11.2 8.5 Q9.5 11 8 13.5 Q6.5 11 4.8 8.5 Q4 10.5 4.5 14 Q1.5 12.5 0.8 9 Z" fill="#1b5ccf"/></svg>
<svg style="left:1794px;top:72px;" width="16" height="16" viewBox="0 0 16 16"><path d="M1 4.5 H5 Q4.2 0.5 7.2 0.5 Q10.2 0.5 9.4 4.5 H12.5 V7.3 Q15.5 6.5 15.5 9.3 Q15.5 12.1 12.5 11.3 V15 H9 Q9.7 12.3 7.2 12.3 Q4.7 12.3 5.4 15 H1 V11.2 Q3.6 11.9 3.6 9.6 Q3.6 7.3 1 8 Z" fill="#f2f2f2"/></svg>
<svg style="left:1826px;top:73px;" width="15" height="14" viewBox="0 0 15 14"><rect x="0.9" y="0.9" width="13.2" height="12.2" fill="none" stroke="#f2f2f2" stroke-width="1.8"/><rect x="8.5" y="1" width="5.5" height="12" fill="#f2f2f2"/></svg>
<svg style="left:1855px;top:69px;" width="22" height="22" viewBox="0 0 22 22"><defs><clipPath id="av"><circle cx="11" cy="11" r="11"/></clipPath></defs><g clip-path="url(#av)"><rect width="22" height="22" fill="#2a2633"/><path d="M9 22 Q8 13 12 10 Q17 8 19 12 L22 22 Z" fill="#eadfe2"/><path d="M12 12 Q14 15 13 19 L11 22" stroke="#b03040" stroke-width="1.2" fill="none"/><path d="M1 19 Q8 16 16 17" stroke="#a9c0d8" stroke-width="1.5" fill="none"/><path d="M0 0 H22 V9 Q16 5 10 9 Q5 12 0 13 Z" fill="#14131a"/><circle cx="20" cy="15" r="3" fill="#f4eef0"/></g></svg>
<div class="r" style="left:1896.9px;top:73.9px;width:3.2px;height:3.2px;border-radius:50%;background:#f2f2f2"></div>
<div class="r" style="left:1896.9px;top:78.9px;width:3.2px;height:3.2px;border-radius:50%;background:#f2f2f2"></div>
<div class="r" style="left:1896.9px;top:83.9px;width:3.2px;height:3.2px;border-radius:50%;background:#f2f2f2"></div>
<div class="r" style="left:0px;top:96px;width:1920px;height:34px;background:#3c3c3c"></div>
<div class="r" style="left:0px;top:130px;width:1920px;height:2px;background:#1e1e1e"></div>
<svg style="left:14px;top:105px;" width="16" height="16" viewBox="0 0 16 16"><circle cx="8" cy="8" r="8" fill="#0f72ab"/><text x="8" y="10.3" font-size="6" font-family="Liberation Sans" font-weight="bold" fill="#fff" text-anchor="middle">OTH</text></svg>
<div class="t" style="left:38.00px;top:105.20px;font-size:15px;color:#e8e8e8;font-family:'Liberation Sans', sans-serif;font-weight:normal;transform:scaleX(0.9897);transform-origin:0 0;">OnTheHub | S...</div>
<svg style="left:162px;top:105px;" width="16" height="16" viewBox="0 0 16 16"><rect width="16" height="16" rx="3" fill="#0f6ef5"/><text x="8" y="12.5" font-size="11" font-family="Liberation Sans" font-weight="bold" fill="#fff" text-anchor="middle">IK</text></svg>
<div class="t" style="left:186.00px;top:105.20px;font-size:15px;color:#e8e8e8;font-family:'Liberation Sans', sans-serif;font-weight:normal;transform:scaleX(1.0076);transform-origin:0 0;">Demo – InferKit</div>
<svg style="left:308px;top:105px;" width="16" height="16" viewBox="0 0 16 16"><rect x="0" y="0" width="7.5" height="7.5" fill="#f22"/><rect x="8.3" y="0" width="7.5" height="7.5" fill="#5fc21e"/><rect x="0" y="8.3" width="7.5" height="7.5" fill="#10a5f5"/><rect x="8.3" y="8.3" width="7.5" height="7.5" fill="#fdb900"/></svg>
<div class="t" style="left:332.00px;top:105.20px;font-size:15px;color:#e8e8e8;font-family:'Liberation Sans', sans-serif;font-weight:normal;transform:scaleX(1.0090);transform-origin:0 0;">Home - Micros...</div>
<svg style="left:460px;top:105px;" width="16" height="16" viewBox="0 0 16 16"><rect width="16" height="16" fill="#ecebd9"/><path d="M5 3 H11 M4 5.5 H12 M5 8 H11 M4 10.5 H12 M5 13 H11" stroke="#2840a0" stroke-width="1.3"/><path d="M8 2 V14" stroke="#2840a0" stroke-width="1"/></svg>
<div class="t" style="left:484.50px;top:105.20px;font-size:15px;color:#e8e8e8;font-family:'Liberation Sans', sans-serif;font-weight:normal;transform:scaleX(0.9805);transform-origin:0 0;">Library Genesis</div>
<svg style="left:604px;top:105px;" width="16" height="16" viewBox="0 0 16 16"><rect width="16" height="16" fill="#fff"/><path d="M4 2 H12 L10 7 Q8.5 8 8.8 10 V13 H11 V15 H5 V13 H7.2 V10 Q7.5 8 6 7 Z" fill="#c8102e"/></svg>
<div class="t" style="left:628.00px;top:105.20px;font-size:15px;color:#e8e8e8;font-family:'Liberation Sans', sans-serif;font-weight:normal;transform:scaleX(1.0237);transform-origin:0 0;">Deep Learnin...</div>
<svg style="left:749px;top:105px;" width="17" height="16" viewBox="0 0 17 16"><ellipse cx="8.5" cy="7.5" rx="8" ry="7" fill="#fcd400"/><path d="M3 13 L2 16 L6 14 Z" fill="#fcd400"/><path d="M6.3 5.2 L4.3 7.5 L6.3 9.8 M10.7 5.2 L12.7 7.5 L10.7 9.8" fill="none" stroke="#222" stroke-width="1.2"/></svg>
<div class="t" style="left:774.00px;top:105.20px;font-size:15px;color:#e8e8e8;font-family:'Liberation Sans', sans-serif;font-weight:normal;transform:scaleX(1.0005);transform-origin:0 0;">Sign Up | free...</div>
<svg style="left:895px;top:105px;" width="16" height="16" viewBox="0 0 16 16"><path d="M6 1 H10 L5 15 H0.5 Z" fill="#1a65d0"/><path d="M10 1 L15.5 15 H8 L10.5 12 L7.5 8 Z" fill="#35a1f4"/></svg>
<div class="t" style="left:919.00px;top:105.20px;font-size:15px;color:#e8e8e8;font-family:'Liberation Sans', sans-serif;font-weight:normal;transform:scaleX(0.9959);transform-origin:0 0;">Education | Ge...</div>
<svg style="left:1046px;top:105px;" width="17" height="16" viewBox="0 0 17 16"><path d="M8 14 A6.5 6.5 0 1 0 1.5 7.5 H4.5 A3.5 3.5 0 1 1 8 11 Z" fill="#0080ff"/><rect x="5" y="11" width="3" height="3" fill="#0080ff"/><rect x="2.5" y="13" width="2.5" height="2.5" fill="#0080ff"/><rect x="0.5" y="11" width="2" height="2" fill="#0080ff"/></svg>
<div class="t" style="left:1071.00px;top:105.20px;font-size:15px;color:#e8e8e8;font-family:'Liberation Sans', sans-serif;font-weight:normal;transform:scaleX(1.0065);transform-origin:0 0;">How To Set Up...</div>
<svg style="left:1201px;top:105px;" width="16" height="16" viewBox="0 0 16 16"><rect width="16" height="16" fill="#355876"/><text x="8" y="10.8" font-size="7" font-family="Liberation Sans" font-weight="bold" fill="#e8eef5" text-anchor="middle">tds</text></svg>
<div class="t" style="left:1225.00px;top:105.20px;font-size:15px;color:#e8e8e8;font-family:'Liberation Sans', sans-serif;font-weight:normal;transform:scaleX(1.0783);transform-origin:0 0;">Downloading...</div>
<svg style="left:1349px;top:105px;" width="16" height="16" viewBox="0 0 16 16"><path d="M8 0 L10 3 L13.7 2.3 L13 6 L16 8 L13 10 L13.7 13.7 L10 13 L8 16 L6 13 L2.3 13.7 L3 10 L0 8 L3 6 L2.3 2.3 L6 3 Z" fill="#e0345a"/><path d="M4.5 7 L8 10 L11.5 7 L8 9 Z" fill="#fff"/></svg>
<div class="t" style="left:1373.00px;top:106.30px;font-size:15px;color:#f0f0f0;font-family:'Liberation Sans', sans-serif;font-weight:normal;">ويجمعنا</div>
<svg style="left:1436px;top:105px;" width="16" height="16" viewBox="0 0 16 16"><circle cx="8" cy="8" r="7" fill="#f2f2f2"/><path d="M4 3.5 Q6 5 5 7 Q7.5 8 6.5 10.5 Q4 10.5 3 8 Z M10 2 Q9 4 11 5.5 Q13.5 5 14 7 Q12 9 13 12 Q10.5 11 9.5 13 Q8.5 10 10 8.5" fill="#3c3c3c"/></svg>
<div class="t" style="left:1460.00px;top:105.20px;font-size:15px;color:#e8e8e8;font-family:'Liberation Sans', sans-serif;font-weight:normal;transform:scaleX(1.0060);transform-origin:0 0;">Deep Learning</div>
<svg style="left:1576px;top:105px;" width="16" height="16" viewBox="0 0 16 16"><rect x="0.5" y="1" width="14" height="14" fill="#0a66c2"/><text x="7.5" y="12.5" font-size="11" font-family="Liberation Sans" font-weight="bold" fill="#fff" text-anchor="middle">in</text><circle cx="14" cy="14" r="2" fill="#e21d1d"/></svg>
<div class="t" style="left:1600.00px;top:105.20px;font-size:15px;color:#e8e8e8;font-family:'Liberation Sans', sans-serif;font-weight:normal;transform:scaleX(1.0188);transform-origin:0 0;">(20) How to H...</div>
<svg style="left:1724px;top:105px;" width="16" height="16" viewBox="0 0 16 16"><rect width="16" height="16" fill="#355876"/><text x="8" y="10.8" font-size="7" font-family="Liberation Sans" font-weight="bold" fill="#e8eef5" text-anchor="middle">tds</text></svg>
<div class="t" style="left:1748.00px;top:105.20px;font-size:15px;color:#e8e8e8;font-family:'Liberation Sans', sans-serif;font-weight:normal;transform:scaleX(0.9792);transform-origin:0 0;">Simple 3D MRI...</div>
<svg style="left:1892px;top:109px;" width="10" height="9" viewBox="0 0 10 9"><path d="M1 1 L4.5 4.5 L1 8 M5.5 1 L9 4.5 L5.5 8" fill="none" stroke="#8a8a8a" stroke-width="1.5"/></svg>
<div class="r" style="left:0px;top:132px;width:1920px;height:948px;background:#eeeeee"></div>
<div class="r" style="left:326px;top:254px;width:1254px;height:826px;background:#fff;box-shadow:0 0 13px 1px rgba(87,87,87,0.2)"></div>
<div class="r" style="left:0px;top:132px;width:1920px;height:122px;background:#fff;box-shadow:0 0 13px 1px rgba(87,87,87,0.2)"></div>
<div class="r" style="left:0px;top:180px;width:1920px;height:1px;background:#e7e7e7"></div>
<svg style="left:338px;top:138px;" width="28" height="31" viewBox="0 0 28 31"><path d="M2.1 10.9 Q13 -4.7 23.8 10.9 Q13 6.0 2.1 10.9 Z" fill="#ff661a"/><path d="M2.1 19 Q13 35.2 23.8 19 Q13 24.5 2.1 19 Z" fill="#ff661a"/><circle cx="2.4" cy="5" r="1.3" fill="#767677"/><circle cx="21.7" cy="2.7" r="1.8" fill="#767677"/><circle cx="4.2" cy="28.2" r="2.3" fill="#9e9e9e"/></svg>
<div class="t" style="left:369.00px;top:138.68px;font-size:24px;color:#5c5c5c;font-family:'Liberation Sans', sans-serif;font-weight:normal;transform:scaleX(1.1522);transform-origin:0 0;">jupyter</div>
<div class="t" style="left:470.00px;top:142.38px;font-size:22px;color:#000;font-family:'Liberation Sans', sans-serif;font-weight:normal;transform:scaleX(0.9609);transform-origin:0 0;">CNN + LSTM V1</div>
<div class="t" style="left:633.00px;top:147.30px;font-size:15px;color:#000;font-family:'Liberation Sans', sans-serif;font-weight:normal;transform:scaleX(0.9498);transform-origin:0 0;">Last Checkpoint: Last Friday at 00:27</div>
<div class="t" style="left:880.00px;top:147.30px;font-size:15px;color:#000;font-family:'Liberation Sans', sans-serif;font-weight:normal;transform:scaleX(0.9562);transform-origin:0 0;">(unsaved changes)</div>
<svg style="left:1462px;top:138px;" width="31" height="31" viewBox="0 0 31 31"><path d="M15.2 1 Q8 1 8.2 4.5 V8.2 H15.5 V9.3 H5 Q1 9.3 1 15.6 Q1 22 4.6 22 H7 V18.3 Q7 14.4 11 14.4 H18.6 Q22 14.4 22 11 V4.6 Q22 1 15.2 1 Z" fill="#2d6ca6"/><circle cx="11.2" cy="4.4" r="1.3" fill="#fff"/><path d="M15.8 30 Q23 30 22.8 26.5 V22.8 H15.5 V21.7 H26 Q30 21.7 30 15.4 Q30 9 26.4 9 H24 V12.7 Q24 16.6 20 16.6 H12.4 Q9 16.6 9 20 V26.4 Q9 30 15.8 30 Z" fill="#ffde4a"/><circle cx="19.8" cy="26.6" r="1.3" fill="#fff"/></svg>
<div class="r" style="left:1517px;top:138px;width:65px;height:31px;border:1px solid #cccccc;border-radius:2px;background:#fff"></div>
<div class="t" style="left:1529.00px;top:146.30px;font-size:15px;color:#333;font-family:'Liberation Sans', sans-serif;font-weight:normal;transform:scaleX(0.8936);transform-origin:0 0;">Logout</div>
<div class="r" style="left:333px;top:181px;width:1254px;height:35px;background:#f8f8f8;border:1px solid #e7e7e7;border-top:none;border-radius:0 0 3px 3px"></div>
<div class="t" style="left:351.00px;top:189.30px;font-size:15px;color:#333;font-family:'Liberation Sans', sans-serif;font-weight:normal;transform:scaleX(0.9515);transform-origin:0 0;">File</div>
<div class="t" style="left:407.00px;top:189.30px;font-size:15px;color:#333;font-family:'Liberation Sans', sans-serif;font-weight:normal;transform:scaleX(0.9285);transform-origin:0 0;">Edit</div>
<div class="t" style="left:464.00px;top:189.30px;font-size:15px;color:#333;font-family:'Liberation Sans', sans-serif;font-weight:normal;transform:scaleX(0.9304);transform-origin:0 0;">View</div>
<div class="t" style="left:528.00px;top:189.30px;font-size:15px;color:#333;font-family:'Liberation Sans', sans-serif;font-weight:normal;transform:scaleX(0.9330);transform-origin:0 0;">Insert</div>
<div class="t" style="left:597.00px;top:189.30px;font-size:15px;color:#333;font-family:'Liberation Sans', sans-serif;font-weight:normal;transform:scaleX(0.9288);transform-origin:0 0;">Cell</div>
<div class="t" style="left:655.00px;top:189.30px;font-size:15px;color:#333;font-family:'Liberation Sans', sans-serif;font-weight:normal;transform:scaleX(0.9225);transform-origin:0 0;">Kernel</div>
<div class="t" style="left:729.00px;top:189.30px;font-size:15px;color:#333;font-family:'Liberation Sans', sans-serif;font-weight:normal;transform:scaleX(0.9597);transform-origin:0 0;">Widgets</div>
<div class="t" style="left:814.00px;top:189.30px;font-size:15px;color:#333;font-family:'Liberation Sans', sans-serif;font-weight:normal;transform:scaleX(0.9400);transform-origin:0 0;">Help</div>
<div class="r" style="left:1375px;top:186px;width:81px;height:24px;border:1px solid #cccccc;border-radius:2px;background:#fff"></div>
<div class="t" style="left:1382.00px;top:191.15px;font-size:14px;color:#333;font-family:'Liberation Sans', sans-serif;font-weight:normal;transform:scaleX(0.9397);transform-origin:0 0;">Not Trusted</div>
<div class="r" style="left:1496px;top:189px;width:1px;height:21px;background:#333"></div>
<div class="t" style="left:1503.00px;top:191.30px;font-size:15px;color:#333;font-family:'Liberation Sans', sans-serif;font-weight:normal;transform:scaleX(0.9458);transform-origin:0 0;">Python 3</div>
<svg style="left:1567px;top:191px;" width="14" height="14" viewBox="0 0 14 14"><circle cx="7" cy="7" r="5.7" fill="none" stroke="#333" stroke-width="1.7"/></svg>
<div class="r" style="left:333px;top:222px;width:32px;height:27px;border:1px solid #cccccc;border-radius:2px;background:#fff"></div>
<div class="r" style="left:371px;top:222px;width:31px;height:27px;border:1px solid #cccccc;border-radius:2px;background:#fff"></div>
<div class="r" style="left:407px;top:222px;width:100px;height:27px;border:1px solid #cccccc;border-radius:2px;background:#fff"></div>
<div class="r" style="left:440px;top:222px;width:1px;height:27px;background:#cccccc"></div>
<div class="r" style="left:474px;top:222px;width:1px;height:27px;background:#cccccc"></div>
<div class="r" style="left:513px;top:222px;width:65px;height:27px;border:1px solid #cccccc;border-radius:2px;background:#fff"></div>
<div class="r" style="left:545px;top:222px;width:1px;height:27px;background:#cccccc"></div>
<div class="r" style="left:583px;top:222px;width:158px;height:27px;border:1px solid #cccccc;border-radius:2px;background:#fff"></div>
<div class="r" style="left:646px;top:222px;width:1px;height:27px;background:#cccccc"></div>
<div class="r" style="left:677px;top:222px;width:1px;height:27px;background:#cccccc"></div>
<div class="r" style="left:708px;top:222px;width:1px;height:27px;background:#cccccc"></div>
<svg style="left:342px;top:228px;" width="14" height="14" viewBox="0 0 14 14"><path d="M1 1 H10.5 L13 3.5 V13 H1 Z" fill="none" stroke="#333" stroke-width="1.6"/><rect x="3.5" y="1" width="6" height="4" fill="none" stroke="#333" stroke-width="1.4"/><rect x="3.2" y="8" width="7.6" height="5" fill="none" stroke="#333" stroke-width="1.4"/></svg>
<svg style="left:379px;top:229px;" width="13" height="13" viewBox="0 0 13 13"><path d="M6.5 0.5 V12.5 M0.5 6.5 H12.5" stroke="#333" stroke-width="3"/></svg>
<svg style="left:416px;top:229px;" width="15" height="13" viewBox="0 0 15 13"><circle cx="3" cy="3" r="2.2" fill="none" stroke="#333" stroke-width="1.3"/><circle cx="3" cy="10" r="2.2" fill="none" stroke="#333" stroke-width="1.3"/><path d="M4.8 4.2 L14.5 10.5 M4.8 8.8 L14.5 2.5" stroke="#333" stroke-width="1.2"/></svg>
<svg style="left:450px;top:228px;" width="15" height="15" viewBox="0 0 15 15"><path d="M4.5 1 H9 L11 3" fill="none" stroke="#333" stroke-width="1.3"/><path d="M1 5 L4.5 1.2 V5 Z" fill="none" stroke="#333" stroke-width="1.2"/><rect x="1" y="4.8" width="6" height="7" fill="none" stroke="#333" stroke-width="1.3"/><rect x="6.5" y="5" width="7" height="9" fill="#fff" stroke="#333" stroke-width="1.4"/></svg>
<svg style="left:483px;top:228px;" width="15" height="15" viewBox="0 0 15 15"><rect x="1" y="1" width="9" height="12" fill="#333"/><rect x="5.5" y="5.5" width="8" height="9" fill="#fff" stroke="#333" stroke-width="1.4"/><rect x="3.5" y="0" width="4" height="2" fill="#333"/></svg>
<svg style="left:523px;top:228px;" width="14" height="14" viewBox="0 0 14 14"><path d="M7 13.5 V3 M1.2 8 L7 2 L12.8 8" fill="none" stroke="#333" stroke-width="2.8" stroke-linejoin="miter"/></svg>
<svg style="left:555px;top:228px;" width="14" height="14" viewBox="0 0 14 14"><path d="M7 0.5 V11 M1.2 6 L7 12 L12.8 6" fill="none" stroke="#333" stroke-width="2.8"/></svg>
<svg style="left:593px;top:229px;" width="12" height="13" viewBox="0 0 12 13"><path d="M0.5 0.5 L11.5 6.5 L0.5 12.5 Z" fill="#333"/></svg>
<div class="t" style="left:611.00px;top:227.30px;font-size:15px;color:#333;font-family:'Liberation Sans', sans-serif;font-weight:normal;transform:scaleX(0.9448);transform-origin:0 0;">Run</div>
<div class="r" style="left:655px;top:229px;width:13px;height:13px;background:#333"></div>
<svg style="left:685px;top:228px;" width="15" height="15" viewBox="0 0 15 15"><path d="M12.3 9.2 A5.6 5.6 0 1 1 11.6 4" fill="none" stroke="#333" stroke-width="2.4"/><path d="M9 0.8 H13.8 V5.6 Z" fill="#333"/></svg>
<svg style="left:717px;top:229px;" width="14" height="13" viewBox="0 0 14 13"><path d="M0.5 0.5 L7 6.5 L0.5 12.5 Z M6.5 0.5 L13 6.5 L6.5 12.5 Z" fill="#333"/></svg>
<div class="r" style="left:746px;top:222px;width:117px;height:26px;border:1px solid #cccccc;border-radius:3px;background:#fff"></div>
<div class="t" style="left:750.00px;top:228.50px;font-size:15px;color:#555;font-family:'Liberation Sans', sans-serif;font-weight:normal;transform:scaleX(0.8645);transform-origin:0 0;">Code</div>
<svg style="left:847px;top:231px;" width="11" height="7" viewBox="0 0 11 7"><path d="M1 1 L5.5 5.5 L10 1" fill="none" stroke="#333" stroke-width="1.8"/></svg>
<div class="r" style="left:872px;top:222px;width:36px;height:27px;border:1px solid #cccccc;border-radius:2px;background:#fff"></div>
<svg style="left:882px;top:230px;" width="16" height="10" viewBox="0 0 16 10"><rect x="0.7" y="0.7" width="14.6" height="8.6" rx="1" fill="none" stroke="#333" stroke-width="1.4"/><path d="M3 3.3 H13 M3 5.3 H13 M4.5 7.2 H11.5" stroke="#333" stroke-width="1.1" stroke-dasharray="1.2 0.8"/></svg>
<div class="r" style="left:349px;top:254px;width:1207px;height:212px;overflow:hidden"><div class="r" style="left:0;top:-60px;width:1207px;height:272px;border-radius:2px;box-shadow:inset 0 2px 8px rgba(0,0,0,0.8)"></div></div>
<div class="r" style="left:349px;top:254px;width:1207px;height:212px;overflow:hidden">
<div class="t" style="left:140.50px;top:1.16px;font-size:16.5px;font-family:'Liberation Mono', monospace;color:#000;transform:scaleX(0.93744);transform-origin:0 0"><span style="color:#000;">      (_bn0): BatchNorm2d(32, eps=0.001, momentum=0.010000000000000009, affine=True, track_running_stats=True)</span></div>
<div class="t" style="left:140.50px;top:19.86px;font-size:16.5px;font-family:'Liberation Mono', monospace;color:#000;transform:scaleX(0.93744);transform-origin:0 0"><span style="color:#000;">      (_blocks): ModuleList(</span></div>
<div class="t" style="left:140.50px;top:38.56px;font-size:16.5px;font-family:'Liberation Mono', monospace;color:#000;transform:scaleX(0.93744);transform-origin:0 0"><span style="color:#000;">        (0): MBConvBlock(</span></div>
<div class="t" style="left:140.50px;top:57.26px;font-size:16.5px;font-family:'Liberation Mono', monospace;color:#000;transform:scaleX(0.93744);transform-origin:0 0"><span style="color:#000;">          (_depthwise_conv): Conv2dStaticSamePadding(</span></div>
<div class="t" style="left:140.50px;top:75.96px;font-size:16.5px;font-family:'Liberation Mono', monospace;color:#000;transform:scaleX(0.93744);transform-origin:0 0"><span style="color:#000;">            32, 32, kernel_size=(3, 3), stride=[1, 1], groups=32, bias=False</span></div>
<div class="t" style="left:140.50px;top:94.66px;font-size:16.5px;font-family:'Liberation Mono', monospace;color:#000;transform:scaleX(0.93744);transform-origin:0 0"><span style="color:#000;">            (static_padding): ZeroPad2d(padding=(1, 1, 1, 1), value=0.0)</span></div>
<div class="t" style="left:140.50px;top:113.36px;font-size:16.5px;font-family:'Liberation Mono', monospace;color:#000;transform:scaleX(0.93744);transform-origin:0 0"><span style="color:#000;">          )</span></div>
<div class="t" style="left:140.50px;top:132.06px;font-size:16.5px;font-family:'Liberation Mono', monospace;color:#000;transform:scaleX(0.93744);transform-origin:0 0"><span style="color:#000;">          (_bn1): BatchNorm2d(32, eps=0.001, momentum=0.010000000000000009, affine=True, track_running_stats=Tru</span></div>
<div class="t" style="left:140.50px;top:150.76px;font-size:16.5px;font-family:'Liberation Mono', monospace;color:#000;transform:scaleX(0.93744);transform-origin:0 0"><span style="color:#000;">e)</span></div>
<div class="t" style="left:140.50px;top:169.46px;font-size:16.5px;font-family:'Liberation Mono', monospace;color:#000;transform:scaleX(0.93744);transform-origin:0 0"><span style="color:#000;">          (_se_reduce): Conv2dStaticSamePadding(</span></div>
<div class="t" style="left:140.50px;top:188.16px;font-size:16.5px;font-family:'Liberation Mono', monospace;color:#000;transform:scaleX(0.93744);transform-origin:0 0"><span style="color:#000;">            32, 8, kernel_size=(1, 1), stride=(1, 1)</span></div>
<div class="t" style="left:140.50px;top:206.86px;font-size:16.5px;font-family:'Liberation Mono', monospace;color:#000;transform:scaleX(0.93744);transform-origin:0 0"><span style="color:#000;">            (static_padding): Identity()</span></div>
</div>
<div class="r" style="left:1541px;top:254px;width:15px;height:212px;background:#f1f1f1"></div>
<svg style="left:1545px;top:455px;" width="8" height="5" viewBox="0 0 8 5"><path d="M0 0 H8 L4 4.5 Z" fill="#505050"/></svg>
<div class="t" style="left:403.24px;top:489.06px;font-size:16.5px;font-family:'Liberation Mono', monospace;color:#000;transform:scaleX(0.93744);transform-origin:0 0"><span style="color:#3a1aa6;">In [19]:</span></div>
<div class="r" style="left:484px;top:480px;width:1072px;height:32px;background:#f7f7f7;border:1px solid #cfcfcf;border-radius:2px"></div>
<div class="t" style="left:489.50px;top:489.06px;font-size:16.5px;font-family:'Liberation Mono', monospace;color:#000;transform:scaleX(0.93744);transform-origin:0 0"><span style="color:#000;">optimizer </span><span style="color:#c800ff;font-weight:bold;position:relative;top:1.3px;">=</span><span style="color:#000;"> torch.optim.Adam(model.parameters() , lr </span><span style="color:#c800ff;font-weight:bold;position:relative;top:1.3px;">=</span><span style="color:#000;"> </span><span style="color:#009a10;">0.00001</span><span style="color:#000;">)</span></div>
<div class="t" style="left:403.24px;top:534.86px;font-size:16.5px;font-family:'Liberation Mono', monospace;color:#000;transform:scaleX(0.93744);transform-origin:0 0"><span style="color:#3a1aa6;">In [34]:</span></div>
<div class="r" style="left:484px;top:526px;width:1072px;height:32px;background:#f7f7f7;border:1px solid #cfcfcf;border-radius:2px"></div>
<div class="t" style="left:489.50px;top:534.86px;font-size:16.5px;font-family:'Liberation Mono', monospace;color:#000;transform:scaleX(0.93744);transform-origin:0 0"><span style="color:#000;">train_monai(model , optimizer , train_dl , validation_dl ,loss , device </span><span style="color:#c800ff;font-weight:bold;position:relative;top:1.3px;">=</span><span style="color:#000;"> device , epochs </span><span style="color:#c800ff;font-weight:bold;position:relative;top:1.3px;">=</span><span style="color:#000;"> </span><span style="color:#009a10;">15</span><span style="color:#000;"> )</span></div>
<div class="r" style="left:349px;top:558px;width:1207px;height:370px;background:#fff"></div>
<div class="r" style="left:349px;top:558px;width:1207px;height:370px;border-radius:2px;box-shadow:inset 0 2px 8px rgba(0,0,0,0.8);background:transparent"></div>
<div class="t" style="left:489.50px;top:567.66px;font-size:16.5px;font-family:'Liberation Mono', monospace;color:#000;transform:scaleX(0.93744);transform-origin:0 0"><span style="color:#00a84f;">~/.conda/envs/gena/lib/python3.6/site-packages/efficientnet_pytorch/utils.py</span><span style="color:#000;"> in </span><span style="color:#1cc4cc;">forward</span><span style="color:#1283fa;">(self, x)</span></div>
<div class="t" style="left:489.50px;top:586.36px;font-size:16.5px;font-family:'Liberation Mono', monospace;color:#000;transform:scaleX(0.93744);transform-origin:0 0"><span style="color:#000;">     </span><span style="color:#007a22;font-weight:bold;">78</span><span style="color:#000;"> </span><span style="color:#00a84f;">class</span><span style="color:#000;"> MemoryEfficientSwish</span><span style="color:#1283fa;">(</span><span style="color:#000;">nn</span><span style="color:#1283fa;">.</span><span style="color:#000;">Module</span><span style="color:#1283fa;">):</span></div>
<div class="t" style="left:489.50px;top:605.06px;font-size:16.5px;font-family:'Liberation Mono', monospace;color:#000;transform:scaleX(0.93744);transform-origin:0 0"><span style="color:#000;">     </span><span style="color:#007a22;font-weight:bold;">79</span><span style="color:#000;">     </span><span style="color:#00a84f;">def</span><span style="color:#000;"> forward</span><span style="color:#1283fa;">(</span><span style="color:#000;">self</span><span style="color:#1283fa;">,</span><span style="color:#000;"> x</span><span style="color:#1283fa;">):</span></div>
<div class="t" style="left:489.50px;top:623.76px;font-size:16.5px;font-family:'Liberation Mono', monospace;color:#000;transform:scaleX(0.93744);transform-origin:0 0"><span style="color:#00a84f;">---&gt; 80</span><span style="color:#000;">         </span><span style="color:#00a84f;">return</span><span style="color:#000;"> SwishImplementation</span><span style="color:#1283fa;">.</span><span style="color:#000;">apply</span><span style="color:#1283fa;">(</span><span style="color:#000;">x</span><span style="color:#1283fa;">)</span></div>
<div class="t" style="left:489.50px;top:642.46px;font-size:16.5px;font-family:'Liberation Mono', monospace;color:#000;transform:scaleX(0.93744);transform-origin:0 0"><span style="color:#000;">     </span><span style="color:#007a22;font-weight:bold;">81</span></div>
<div class="t" style="left:489.50px;top:661.16px;font-size:16.5px;font-family:'Liberation Mono', monospace;color:#000;transform:scaleX(0.93744);transform-origin:0 0"><span style="color:#000;">     </span><span style="color:#007a22;font-weight:bold;">82</span></div>
<div class="t" style="left:489.50px;top:698.56px;font-size:16.5px;font-family:'Liberation Mono', monospace;color:#000;transform:scaleX(0.93744);transform-origin:0 0"><span style="color:#00a84f;">~/.conda/envs/gena/lib/python3.6/site-packages/efficientnet_pytorch/utils.py</span><span style="color:#000;"> in </span><span style="color:#1cc4cc;">forward</span><span style="color:#1283fa;">(ctx, i)</span></div>
<div class="t" style="left:489.50px;top:717.26px;font-size:16.5px;font-family:'Liberation Mono', monospace;color:#000;transform:scaleX(0.93744);transform-origin:0 0"><span style="color:#000;">     </span><span style="color:#007a22;font-weight:bold;">65</span><span style="color:#000;">     </span><span style="color:#1283fa;">@</span><span style="color:#000;">staticmethod</span></div>
<div class="t" style="left:489.50px;top:735.96px;font-size:16.5px;font-family:'Liberation Mono', monospace;color:#000;transform:scaleX(0.93744);transform-origin:0 0"><span style="color:#000;">     </span><span style="color:#007a22;font-weight:bold;">66</span><span style="color:#000;">     </span><span style="color:#00a84f;">def</span><span style="color:#000;"> forward</span><span style="color:#1283fa;">(</span><span style="color:#000;">ctx</span><span style="color:#1283fa;">,</span><span style="color:#000;"> i</span><span style="color:#1283fa;">):</span></div>
<div class="t" style="left:489.50px;top:754.66px;font-size:16.5px;font-family:'Liberation Mono', monospace;color:#000;transform:scaleX(0.93744);transform-origin:0 0"><span style="color:#00a84f;">---&gt; 67</span><span style="color:#000;">         </span><span style="color:#000;">result </span><span style="color:#1283fa;position:relative;top:1.3px;">=</span><span style="color:#000;"> i </span><span style="color:#1283fa;">*</span><span style="color:#000;"> torch</span><span style="color:#1283fa;">.</span><span style="color:#000;">sigmoid</span><span style="color:#1283fa;">(</span><span style="color:#000;">i</span><span style="color:#1283fa;">)</span></div>
<div class="t" style="left:489.50px;top:773.36px;font-size:16.5px;font-family:'Liberation Mono', monospace;color:#000;transform:scaleX(0.93744);transform-origin:0 0"><span style="color:#000;">     </span><span style="color:#007a22;font-weight:bold;">68</span><span style="color:#000;">         </span><span style="color:#000;">ctx</span><span style="color:#1283fa;">.</span><span style="color:#000;">save_for_backward</span><span style="color:#1283fa;">(</span><span style="color:#000;">i</span><span style="color:#1283fa;">)</span></div>
<div class="t" style="left:489.50px;top:792.06px;font-size:16.5px;font-family:'Liberation Mono', monospace;color:#000;transform:scaleX(0.93744);transform-origin:0 0"><span style="color:#000;">     </span><span style="color:#007a22;font-weight:bold;">69</span><span style="color:#000;">         </span><span style="color:#00a84f;">return</span><span style="color:#000;"> result</span></div>
<div class="t" style="left:489.50px;top:829.46px;font-size:16.5px;font-family:'Liberation Mono', monospace;color:#000;transform:scaleX(0.93744);transform-origin:0 0"><span style="color:#f2294e;">RuntimeError</span><span style="color:#000;">: CUDA out of memory. Tried to allocate 442.00 MiB (GPU 0; 11.17 GiB total capacity; 9.60 GiB alread</span></div>
<div class="t" style="left:489.50px;top:848.16px;font-size:16.5px;font-family:'Liberation Mono', monospace;color:#000;transform:scaleX(0.93744);transform-origin:0 0"><span style="color:#000;">y allocated; 396.88 MiB free; 10.28 GiB reserved in total by PyTorch) If reserved memory is &gt;&gt; allocated memory </span></div>
<div class="t" style="left:489.50px;top:866.86px;font-size:16.5px;font-family:'Liberation Mono', monospace;color:#000;transform:scaleX(0.93744);transform-origin:0 0"><span style="color:#000;">try setting max_split_size_mb to avoid fragmentation.  See documentation for Memory Management and PYTORCH_CUDA_</span></div>
<div class="t" style="left:489.50px;top:885.56px;font-size:16.5px;font-family:'Liberation Mono', monospace;color:#000;transform:scaleX(0.93744);transform-origin:0 0"><span style="color:#000;">ALLOC_CONF</span></div>
<div class="r" style="left:1541px;top:558px;width:15px;height:370px;background:#f1f1f1"></div>
<div class="r" style="left:1543px;top:854px;width:11px;height:59px;background:#c1c1c1"></div>
<svg style="left:1545px;top:563px;" width="8" height="5" viewBox="0 0 8 5"><path d="M0 4.5 H8 L4 0 Z" fill="#505050"/></svg>
<svg style="left:1545px;top:917px;" width="8" height="5" viewBox="0 0 8 5"><path d="M0 0 H8 L4 4.5 Z" fill="#a3a3a3"/></svg>
<div class="t" style="left:412.53px;top:950.06px;font-size:16.5px;font-family:'Liberation Mono', monospace;color:#000;transform:scaleX(0.93744);transform-origin:0 0"><span style="color:#3a1aa6;">In [ ]:</span></div>
<div class="r" style="left:484px;top:941px;width:1072px;height:33px;background:#f7f7f7;border:1px solid #cfcfcf;border-radius:2px"></div>
<div class="t" style="left:489.50px;top:950.06px;font-size:16.5px;font-family:'Liberation Mono', monospace;color:#000;transform:scaleX(0.93744);transform-origin:0 0"><span style="color:#000;">torch.cuda.empty_cache()</span></div>
<div class="t" style="left:412.53px;top:996.36px;font-size:16.5px;font-family:'Liberation Mono', monospace;color:#000;transform:scaleX(0.93744);transform-origin:0 0"><span style="color:#3a1aa6;">In [ ]:</span></div>
<div class="r" style="left:484px;top:987px;width:1072px;height:33px;background:#f7f7f7;border:1px solid #cfcfcf;border-radius:2px"></div>
<div class="t" style="left:489.50px;top:996.36px;font-size:16.5px;font-family:'Liberation Mono', monospace;color:#000;transform:scaleX(0.93744);transform-origin:0 0"><span style="color:#000;">model(batch[</span><span style="color:#dc0024;">&quot;image&quot;</span><span style="color:#000;">]</span><span style="color:#000;">.permute(</span><span style="color:#009a10;">0</span><span style="color:#000;">,</span><span style="color:#009a10;">4</span><span style="color:#000;">,</span><span style="color:#009a10;">1</span><span style="color:#000;">,</span><span style="color:#009a10;">2</span><span style="color:#000;">,</span><span style="color:#009a10;">3</span><span style="color:#000;">).to(device))</span></div>
<div class="r" style="left:342px;top:1026px;width:1221px;height:80px;border:1px solid #ababab;border-radius:2px"></div>
<div class="r" style="left:342px;top:1026px;width:6px;height:60px;background:#1898f3"></div>
<div class="t" style="left:403.24px;top:1042.26px;font-size:16.5px;font-family:'Liberation Mono', monospace;color:#000;transform:scaleX(0.93744);transform-origin:0 0"><span style="color:#3a1aa6;">In [22]:</span></div>
<div class="r" style="left:484px;top:1033px;width:1072px;height:33px;background:#f7f7f7;border:1px solid #cfcfcf;border-radius:2px"></div>
<div class="t" style="left:489.50px;top:1042.26px;font-size:16.5px;font-family:'Liberation Mono', monospace;color:#000;transform:scaleX(0.93744);transform-origin:0 0"><span style="color:#000;">torch.cuda.memory_allocated(device</span><span style="color:#c800ff;font-weight:bold;position:relative;top:1.3px;">=</span><span style="color:#000;">torch.device(</span><span style="color:#dc0024;">&quot;cuda&quot;</span><span style="color:#000;">))</span></div>
<div class="t" style="left:403.24px;top:1073.06px;font-size:16.5px;font-family:'Liberation Mono', monospace;color:#000;transform:scaleX(0.93744);transform-origin:0 0"><span style="color:#ea1c0c;">Out[22]:</span></div>
<div class="t" style="left:489.50px;top:1073.06px;font-size:16.5px;font-family:'Liberation Mono', monospace;color:#000;transform:scaleX(0.93744);transform-origin:0 0"><span style="color:#000;">70121984</span></div>
<div class="r" style="left:1905px;top:254px;width:15px;height:826px;background:#f1f1f1"></div>
<svg style="left:1908px;top:260px;" width="8" height="5" viewBox="0 0 8 5"><path d="M0 4.5 H8 L4 0 Z" fill="#505050"/></svg>
<div class="r" style="left:1907px;top:852px;width:11px;height:58px;background:#c1c1c1"></div>
<svg style="left:1908px;top:1072px;" width="8" height="5" viewBox="0 0 8 5"><path d="M0 0 H8 L4 4.5 Z" fill="#505050"/></svg>
</body></html>
